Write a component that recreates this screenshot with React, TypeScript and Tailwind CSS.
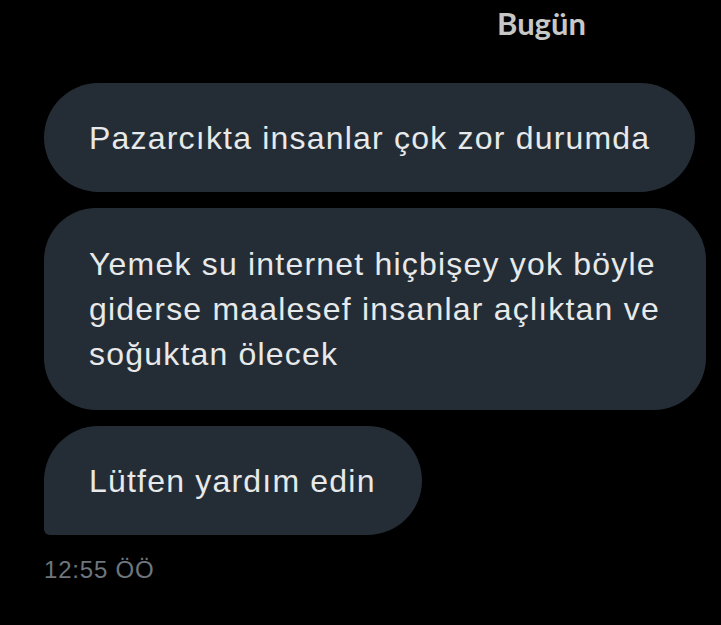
const msgFont = { fontFamily: "'Liberation Sans', Arial, sans-serif" };

export default function App() {
  return (
    <div className="w-[721px] h-[625px] bg-black overflow-hidden relative" style={msgFont}>
      <div className="pl-[497px] pt-[4px] h-[83px]">
        <span
          className="text-[31px] font-bold text-[#c7c7c7] leading-[38px]"
          style={{ fontFamily: "Lato, sans-serif" }}
        >
          Bugün
        </span>
      </div>

      <div className="flex flex-col gap-[16px] pl-[44px]">
        <div className="w-[651px] h-[109px] bg-[#242d35] rounded-[55px] pl-[45px] flex items-center text-[32px] tracking-[1.2px] text-[#e7e9ea] leading-[46px]">
          Pazarcıkta insanlar çok zor durumda
        </div>
        <div className="w-[662px] h-[202px] bg-[#242d35] rounded-[52px] pl-[45px] flex items-center text-[32px] tracking-[1.2px] text-[#e7e9ea] leading-[45px]">
          <p>
            Yemek su internet hiçbişey yok böyle
            <br />
            giderse maalesef insanlar açlıktan ve
            <br />
            soğuktan ölecek
          </p>
        </div>
        <div className="w-[378px] h-[109px] bg-[#242d35] rounded-[55px] rounded-bl-[6px] pl-[45px] flex items-center text-[32px] tracking-[1.2px] text-[#e7e9ea] leading-[46px]">
          Lütfen yardım edin
        </div>
        <div className="pt-[4px] text-[24px] tracking-[0.8px] leading-[30px] text-[#6e767d]">12:55 ÖÖ</div>
      </div>
    </div>
  );
}
